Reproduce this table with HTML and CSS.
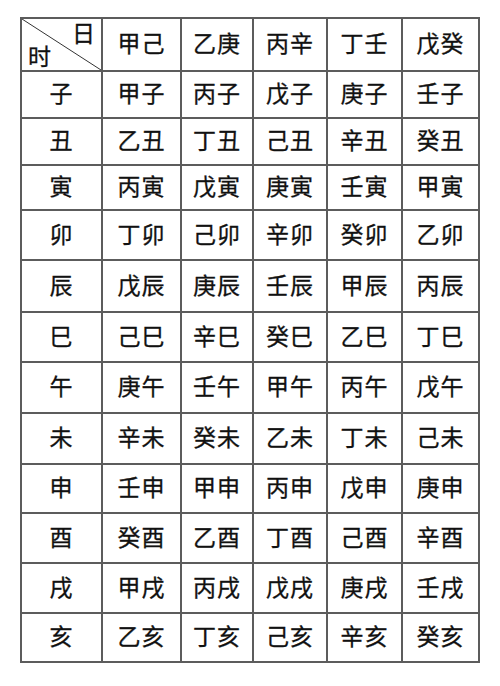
FILE: index.html
```html
<!DOCTYPE html>
<html lang="zh">
<head>
<meta charset="utf-8">
<title>日上起时表</title>
<link rel="stylesheet" href="styles.css">
</head>
<body>
<div class="page">
<table class="ganzhi">
<colgroup>
<col class="c1"><col class="c2"><col class="c3"><col class="c4"><col class="c5"><col class="c6">
</colgroup>
<tbody>
<tr class="head">
<td class="corner">
<svg class="diag" viewBox="0 0 100 100" preserveAspectRatio="none"><line x1="0" y1="0" x2="100" y2="100" vector-effect="non-scaling-stroke"/></svg>
<span class="ri">日</span>
<span class="shi">时</span>
</td>
<td>甲己</td><td>乙庚</td><td>丙辛</td><td>丁壬</td><td>戊癸</td>
</tr>
<tr><td>子</td><td>甲子</td><td>丙子</td><td>戊子</td><td>庚子</td><td>壬子</td></tr>
<tr><td>丑</td><td>乙丑</td><td>丁丑</td><td>己丑</td><td>辛丑</td><td>癸丑</td></tr>
<tr><td>寅</td><td>丙寅</td><td>戊寅</td><td>庚寅</td><td>壬寅</td><td>甲寅</td></tr>
<tr><td>卯</td><td>丁卯</td><td>己卯</td><td>辛卯</td><td>癸卯</td><td>乙卯</td></tr>
<tr><td>辰</td><td>戊辰</td><td>庚辰</td><td>壬辰</td><td>甲辰</td><td>丙辰</td></tr>
<tr><td>巳</td><td>己巳</td><td>辛巳</td><td>癸巳</td><td>乙巳</td><td>丁巳</td></tr>
<tr><td>午</td><td>庚午</td><td>壬午</td><td>甲午</td><td>丙午</td><td>戊午</td></tr>
<tr><td>未</td><td>辛未</td><td>癸未</td><td>乙未</td><td>丁未</td><td>己未</td></tr>
<tr><td>申</td><td>壬申</td><td>甲申</td><td>丙申</td><td>戊申</td><td>庚申</td></tr>
<tr><td>酉</td><td>癸酉</td><td>乙酉</td><td>丁酉</td><td>己酉</td><td>辛酉</td></tr>
<tr><td>戌</td><td>甲戌</td><td>丙戌</td><td>戊戌</td><td>庚戌</td><td>壬戌</td></tr>
<tr><td>亥</td><td>乙亥</td><td>丁亥</td><td>己亥</td><td>辛亥</td><td>癸亥</td></tr>
</tbody>
</table>
</div>
</body>
</html>
```
FILE: styles.css
```css
html, body {
  margin: 0;
  padding: 0;
  background: #ffffff;
}

.page {
  padding: 17px 0 0 20px;
}

.ganzhi {
  border-collapse: collapse;
  table-layout: fixed;
  width: 458px;
  font-family: "Noto Sans CJK SC", "Noto Sans", sans-serif;
  font-size: 23px;
  color: #111111;
  -webkit-text-stroke: 0.3px #111111;
}

.c1 { width: 81px; }
.c2 { width: 79px; }
.c3 { width: 72px; }
.c4 { width: 74px; }
.c5 { width: 75px; }
.c6 { width: 77px; }

.ganzhi td {
  border: 2px solid #5c5c5c;
  padding: 0 0 4px 0;
  text-align: center;
  vertical-align: middle;
  line-height: 1;
  letter-spacing: 1px;
  white-space: nowrap;
}

.ganzhi tr { height: 50px; }
.ganzhi tr.head { height: 53px; }
.ganzhi tr:nth-child(2),
.ganzhi tr:nth-child(3) { height: 47px; }
.ganzhi tr:nth-child(4) { height: 45px; }
.ganzhi tr:nth-child(6) { height: 52px; }
.ganzhi tr:nth-child(8),
.ganzhi tr:nth-child(9) { height: 51px; }
.ganzhi tr:nth-child(10),
.ganzhi tr:nth-child(13) { height: 49px; }

.corner {
  position: relative;
}

.diag {
  position: absolute;
  left: 0;
  top: 0;
  width: 100%;
  height: 100%;
}

.diag line {
  stroke: #333333;
  stroke-width: 1;
}

.ri {
  position: absolute;
  right: 5px;
  top: 2px;
}

.shi {
  position: absolute;
  left: 6px;
  bottom: 3px;
}
```
